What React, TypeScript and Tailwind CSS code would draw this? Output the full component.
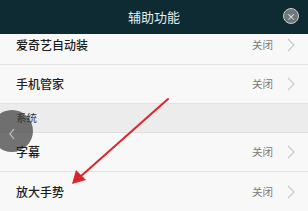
import React from "react";

const rows1 = ["爱奇艺自动装", "手机管家"];
const rows2 = ["字幕", "放大手势"];

function Chevron() {
  return (
    <svg width="8" height="14" viewBox="0 0 8 14" className="ml-[14px]">
      <path d="M1 1l6 6-6 6" fill="none" stroke="#c8c8c8" strokeWidth="1.1" />
    </svg>
  );
}

function Row({ label, last }: { label: string; last?: boolean }) {
  return (
    <div
      className={`flex h-[39px] items-center justify-between bg-[#f8f8f8] pl-4 pr-[13px] ${
        last ? "" : "border-b border-[#e2e2e2]"
      }`}
    >
      <span className="relative z-10 text-[12px] font-medium text-[#1e1e1e]">{label}</span>
      <div className="flex items-center">
        <span className="text-[10.5px] text-[#7a7a7a]">关闭</span>
        <Chevron />
      </div>
    </div>
  );
}

export default function App() {
  return (
    <div
      className="relative h-[211px] w-[308px] overflow-hidden bg-[#f8f8f8]"
      style={{ fontFamily: '"Noto Sans CJK SC", sans-serif' }}
    >
      <header className="relative z-20 flex h-[34px] items-center justify-center bg-[#0e2a32]">
        <span className="text-[13px] text-[#e4ebec]">辅助功能</span>
        <div className="absolute right-[9px] top-[8px] flex h-[16px] w-[16px] items-center justify-center rounded-full border border-[#c9cfd0] bg-[#6f7677]">
          <span className="text-[9px] leading-none text-white">×</span>
        </div>
      </header>

      <div className="-mt-[8px]">
        {rows1.map((r) => (
          <Row key={r} label={r} />
        ))}
        <div className="flex h-[29px] items-center border-b border-[#dedede] bg-[#ececec] pl-4">
          <span className="relative z-10 text-[10.5px] text-[#333]">系统</span>
        </div>
        {rows2.map((r, i) => (
          <Row key={r} label={r} last={i === rows2.length - 1} />
        ))}
      </div>

      {/* floating back button */}
      <div className="absolute left-[-9px] top-[110px] flex h-[42px] w-[42px] items-center justify-end rounded-full bg-[#505050]/80 pr-[18px]">
        <svg width="6" height="12" viewBox="0 0 6 12" className="mt-[6px]">
          <path d="M5 1L1 6l4 5" fill="none" stroke="#c4c4c4" strokeWidth="1.2" />
        </svg>
      </div>

      {/* red annotation arrow */}
      <svg className="absolute left-0 top-0 z-10" width="308" height="211" viewBox="0 0 308 211">
        <line x1="168" y1="99" x2="80" y2="177" stroke="#d8262c" strokeWidth="2" strokeLinecap="round" />
        <polygon points="72,184 76,170 86,180" fill="#d8262c" />
      </svg>
    </div>
  );
}
